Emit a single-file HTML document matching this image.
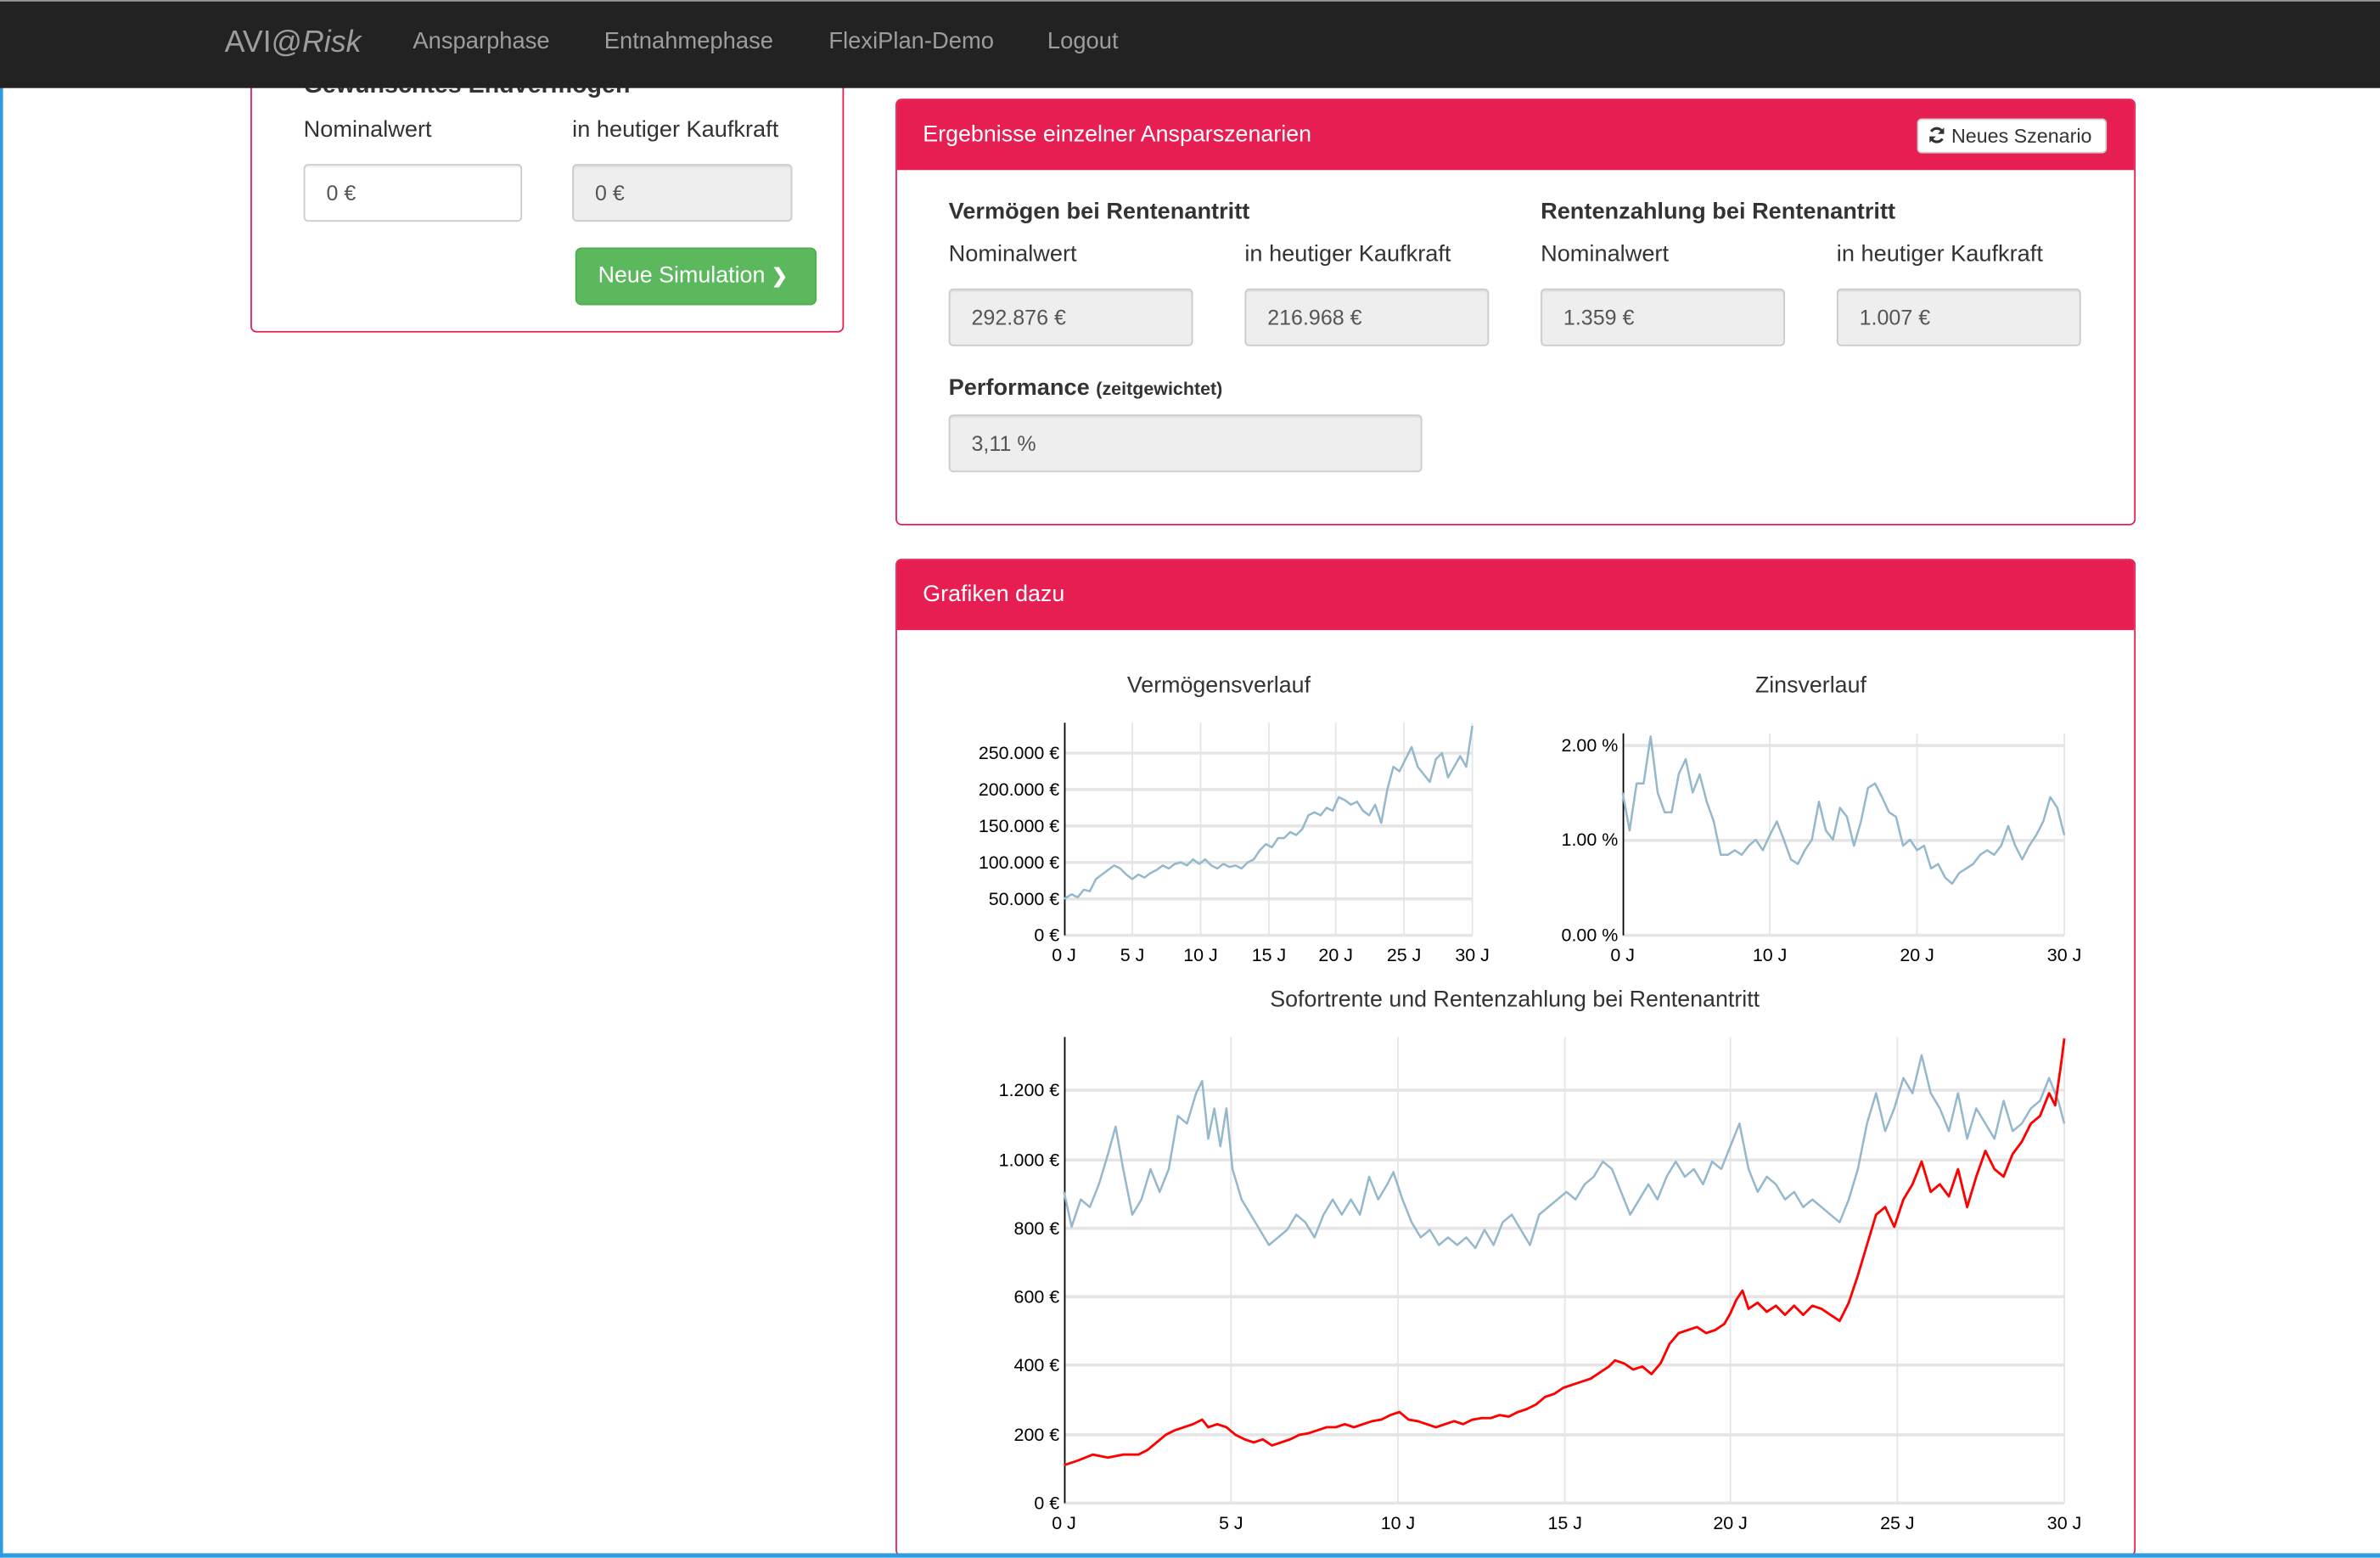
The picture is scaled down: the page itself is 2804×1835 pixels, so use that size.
<!DOCTYPE html>
<html><head><meta charset="utf-8">
<style>
html,body{margin:0;padding:0;background:#fff;overflow:hidden;width:2804px;height:1835px}
#w{position:absolute;left:0;top:0;width:1568px;height:1026px;overflow:hidden;transform:scale(1.78827);transform-origin:0 0;font-family:"Liberation Sans",Arial,sans-serif;color:#333;font-size:15px}
.a{position:absolute}
.nav{left:0;top:0;width:1568px;height:57px;background:#222;border-top:1px solid #999}
.nl{color:#9d9d9d;font-size:15.3px;top:19px}
.panel{border:1px solid #e31e52;border-radius:4px;background:#fff}
.ph{background:#e71e52;color:#fff;font-size:15px}
.inp{border:1px solid #ccc;border-radius:3px;box-shadow:inset 0 1px 1px rgba(0,0,0,.08);font-size:14px;color:#555;box-sizing:border-box;padding-left:14px;line-height:36px}
.g{background:#eee}
.lab{font-size:15.2px;color:#333}
.b{font-weight:bold}
</style></head><body><div id="w">
<div class="a" style="left:0;top:0;width:2px;height:1026px;background:#2d9be0"></div>

<div class="a panel" style="left:165px;top:20px;width:389px;height:197px"></div>
<div class="a lab b" style="left:200px;top:48px;font-size:16px">Gewünschtes Endvermögen</div>
<div class="a lab" style="left:200px;top:77px">Nominalwert</div>
<div class="a lab" style="left:377px;top:77px">in heutiger Kaufkraft</div>
<div class="a inp" style="left:200px;top:108px;width:144px;height:38px;line-height:36px">0 €</div>
<div class="a inp g" style="left:377px;top:108px;width:145px;height:38px">0 €</div>
<div class="a" style="left:379px;top:163px;width:159px;height:38px;background:#5cb85c;border:1px solid #4cae4c;border-radius:4px;box-sizing:border-box;color:#fff;font-size:15px;line-height:36px;padding-left:14px">Neue Simulation <b style="font-size:13px">❯</b></div>

<div class="a nav"></div>
<div class="a" style="left:148px;top:17px;color:#9d9d9d;font-size:20px">AVI@<i>Risk</i></div>
<div class="a nl" style="left:272px">Ansparphase</div>
<div class="a nl" style="left:398px">Entnahmephase</div>
<div class="a nl" style="left:546px">FlexiPlan-Demo</div>
<div class="a nl" style="left:690px">Logout</div>

<div class="a panel" style="left:590px;top:65px;width:815px;height:279px;overflow:hidden">
<div class="ph" style="height:46px;line-height:45px;padding-left:17px">Ergebnisse einzelner Ansparszenarien</div>
</div>
<div class="a" style="left:1263px;top:78px;width:125px;height:23px;background:#fff;border:1px solid #ccc;border-radius:3px;box-sizing:border-box;font-size:13px;line-height:21px;color:#333;padding-left:6px"><svg width="12" height="12" viewBox="0 0 12 12" style="vertical-align:-1px"><path d="M10 4.5A4.3 4.3 0 0 0 2.3 3.6M2 7.5a4.3 4.3 0 0 0 7.7.9" fill="none" stroke="#333" stroke-width="1.8"/><path d="M10.8 1v4.2H6.6zM1.2 11V6.8h4.2z" fill="#333"/></svg> Neues Szenario</div>

<div class="a lab b" style="left:625px;top:131px">Vermögen bei Rentenantritt</div>
<div class="a lab b" style="left:1015px;top:131px">Rentenzahlung bei Rentenantritt</div>
<div class="a lab" style="left:625px;top:159px">Nominalwert</div>
<div class="a lab" style="left:820px;top:159px">in heutiger Kaufkraft</div>
<div class="a lab" style="left:1015px;top:159px">Nominalwert</div>
<div class="a lab" style="left:1210px;top:159px">in heutiger Kaufkraft</div>
<div class="a inp g" style="left:625px;top:190px;width:161px;height:38px">292.876 €</div>
<div class="a inp g" style="left:820px;top:190px;width:161px;height:38px">216.968 €</div>
<div class="a inp g" style="left:1015px;top:190px;width:161px;height:38px">1.359 €</div>
<div class="a inp g" style="left:1210px;top:190px;width:161px;height:38px">1.007 €</div>
<div class="a lab" style="left:625px;top:247px"><b>Performance</b> <b style="font-size:12px">(zeitgewichtet)</b></div>
<div class="a inp g" style="left:625px;top:273px;width:312px;height:38px">3,11 %</div>

<div class="a panel" style="left:590px;top:368px;width:815px;height:655px;overflow:hidden">
<div class="ph" style="height:46px;line-height:45px;padding-left:17px">Grafiken dazu</div>
</div>
<div class="a" style="left:0;top:1023px;width:1568px;height:3px;background:#2d9be0"></div>

<svg class="a" style="left:0;top:0" width="1568" height="1026" viewBox="0 0 1568 1026" font-family="Liberation Sans, Arial, sans-serif">
<g font-size="15" fill="#333" text-anchor="middle">
<text x="803" y="456">Vermögensverlauf</text>
<text x="1193" y="456">Zinsverlauf</text>
<text x="998" y="663">Sofortrente und Rentenzahlung bei Rentenantritt</text>
</g>
<g stroke="#e5e5e5" stroke-width="1">
<path d="M746 476V616M791 476V616M836 476V616M880 476V616M925 476V616M970 476V616"/>
<path d="M1166 483V616M1263 483V616M1360 483V616"/>
<path d="M811 683V990M921 683V990M1031 683V990M1140 683V990M1250 683V990M1360 683V990"/>
</g>
<g stroke="#e5e5e5" stroke-width="2">
<path d="M701 496H970M701 520H970M701 544H970M701 568H970M701 592H970M701 616H970"/>
<path d="M1069 491H1360M1069 553.5H1360M1069 616H1360"/>
<path d="M701 718H1360M701 764H1360M701 809H1360M701 854H1360M701 899H1360M701 945H1360M701 990H1360"/>
</g>
<g stroke="#000" stroke-width="1"><path d="M701.5 476V616M1069.5 483V616M701.5 683V990"/></g>
<g font-size="12" fill="#000" text-anchor="end">
<text x="698" y="500">250.000 €</text><text x="698" y="524">200.000 €</text><text x="698" y="548">150.000 €</text><text x="698" y="572">100.000 €</text><text x="698" y="596">50.000 €</text><text x="698" y="620">0 €</text>
<text x="1066" y="495">2.00 %</text><text x="1066" y="557">1.00 %</text><text x="1066" y="620">0.00 %</text>
<text x="698" y="722">1.200 €</text><text x="698" y="768">1.000 €</text><text x="698" y="813">800 €</text><text x="698" y="858">600 €</text><text x="698" y="903">400 €</text><text x="698" y="949">200 €</text><text x="698" y="994">0 €</text>
</g>
<g font-size="12" fill="#000" text-anchor="middle">
<text x="701" y="633">0 J</text><text x="746" y="633">5 J</text><text x="791" y="633">10 J</text><text x="836" y="633">15 J</text><text x="880" y="633">20 J</text><text x="925" y="633">25 J</text><text x="970" y="633">30 J</text>
<text x="1069" y="633">0 J</text><text x="1166" y="633">10 J</text><text x="1263" y="633">20 J</text><text x="1360" y="633">30 J</text>
<text x="701" y="1007">0 J</text><text x="811" y="1007">5 J</text><text x="921" y="1007">10 J</text><text x="1031" y="1007">15 J</text><text x="1140" y="1007">20 J</text><text x="1250" y="1007">25 J</text><text x="1360" y="1007">30 J</text>
</g>
<g fill="none" stroke="#94b8cc" stroke-width="1.4" stroke-linejoin="round">
<polyline points="701,592 706,589 710,591 714,586 718,587 722,579 726,576 730,573 734,570 738,572 742,576 746,579 750,576 754,578 758,575 762,573 766,570 770,572 774,569 778,568 782,570 786,566 790,569 794,566 798,570 802,572 806,569 810,571 814,570 818,572 822,568 826,566 830,560 834,556 838,558 842,552 846,552 850,548 854,550 858,546 862,537 866,535 870,537 874,532 878,534 882,525 886,527 890,530 894,528 898,534 902,537 906,530 910,542 914,520 918,505 922,508 926,500 930,492 934,505 938,510 942,515 946,500 950,496 954,512 958,505 962,498 966,505 970,478"/>
<polyline vector-effect="non-scaling-stroke" transform="translate(1069 0) scale(1.1548 1) translate(-1069 0)" points="1069,522 1073,547 1077,516 1081,516 1085,485 1089,522 1093,535 1097,535 1101,510 1105,500 1109,522 1113,510 1117,528 1121,541 1125,563 1129,563 1133,560 1137,563 1141,557 1145,553 1149,560 1153,550 1157,541 1161,553 1165,566 1169,569 1173,560 1177,553 1181,528 1185,547 1189,553 1193,532 1197,538 1201,557 1205,541 1209,519 1213,516 1217,525 1221,535 1225,538 1229,557 1233,553 1237,560 1241,557 1245,572 1249,569 1253,578 1257,582 1261,575 1265,572 1269,569 1273,563 1277,560 1281,563 1285,557 1289,544 1293,557 1297,566 1301,557 1305,550 1309,541 1313,525 1317,532 1321,550"/>
<polyline points="701,785 706,808 712,790 718,795 724,780 730,760 735,742 740,770 746,800 752,790 758,770 764,785 770,770 776,735 782,740 788,720 792,712 796,750 800,730 804,755 808,730 812,770 818,790 824,800 830,810 836,820 842,815 848,810 854,800 860,805 866,815 872,800 878,790 884,800 890,790 896,800 902,775 908,790 914,780 918,772 924,790 930,805 936,815 942,810 948,820 954,815 960,820 966,815 972,822 978,810 984,820 990,805 996,800 1002,810 1008,820 1014,800 1020,795 1026,790 1032,785 1038,790 1044,780 1050,775 1056,765 1062,770 1068,785 1074,800 1080,790 1086,780 1092,790 1098,775 1104,765 1110,775 1116,770 1122,780 1128,765 1134,770 1140,755 1146,740 1152,770 1158,785 1164,775 1170,780 1176,790 1182,785 1188,795 1194,790 1200,795 1206,800 1212,805 1218,790 1224,770 1230,740 1236,720 1242,745 1248,730 1254,710 1260,720 1266,695 1272,720 1278,730 1284,745 1290,720 1296,750 1302,730 1308,740 1314,750 1320,725 1326,745 1332,740 1338,730 1344,725 1350,710 1356,725 1360,740"/>
</g>
<polyline fill="none" stroke="#ff0000" stroke-width="1.6" stroke-linejoin="round" points="701,965 710,962 720,958 730,960 740,958 750,958 756,955 762,950 768,945 774,942 780,940 786,938 792,935 796,940 802,938 808,940 814,945 820,948 826,950 832,948 838,952 844,950 850,948 856,945 862,944 868,942 874,940 880,940 886,938 892,940 898,938 904,936 910,935 916,932 922,930 928,935 934,936 940,938 946,940 952,938 958,936 964,938 970,935 976,934 982,934 988,932 994,933 1000,930 1006,928 1012,925 1018,920 1024,918 1030,914 1036,912 1042,910 1048,908 1054,904 1060,900 1064,896 1070,898 1076,902 1082,900 1088,905 1094,898 1100,885 1106,878 1112,876 1118,874 1124,878 1130,876 1136,872 1140,865 1144,856 1148,850 1152,862 1158,858 1164,864 1170,860 1176,866 1182,860 1188,866 1194,860 1200,862 1206,866 1212,870 1218,858 1224,840 1230,820 1236,800 1242,795 1248,808 1254,790 1260,780 1266,765 1272,785 1278,780 1284,788 1290,770 1296,795 1302,775 1308,758 1314,770 1320,775 1326,760 1332,752 1338,740 1344,735 1350,720 1354,728 1358,700 1360,684"/>
</svg>
</div></body></html>
